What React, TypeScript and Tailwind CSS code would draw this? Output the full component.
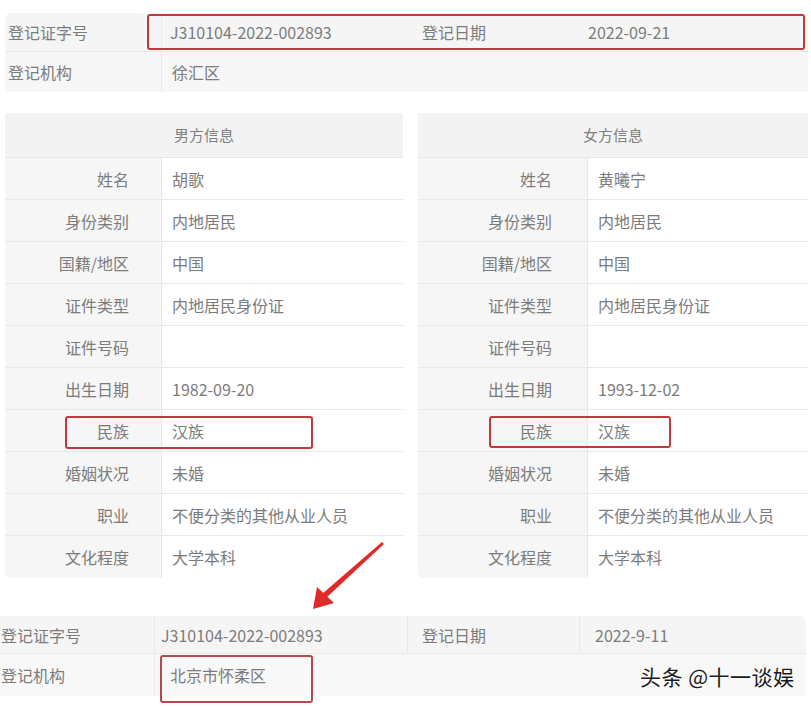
import React from 'react';

const font = { fontFamily: '"Noto Sans CJK SC", "Noto Sans", sans-serif' };

type Row = { label: string; value: string };

const maleRows: Row[] = [
  { label: '姓名', value: '胡歌' },
  { label: '身份类别', value: '内地居民' },
  { label: '国籍/地区', value: '中国' },
  { label: '证件类型', value: '内地居民身份证' },
  { label: '证件号码', value: '' },
  { label: '出生日期', value: '1982-09-20' },
  { label: '民族', value: '汉族' },
  { label: '婚姻状况', value: '未婚' },
  { label: '职业', value: '不便分类的其他从业人员' },
  { label: '文化程度', value: '大学本科' },
];

const femaleRows: Row[] = maleRows.map((r) => {
  if (r.label === '姓名') return { ...r, value: '黄曦宁' };
  if (r.label === '出生日期') return { ...r, value: '1993-12-02' };
  return r;
});

function Panel({ title, rows, labelW, labelPad }: { title: string; rows: Row[]; labelW: string; labelPad: string }) {
  return (
    <div className="flex flex-col rounded-b-md overflow-hidden bg-[#fbfbfb]">
      <div className="h-[45px] flex items-center justify-center bg-[#f3f3f3] border-b border-[#e6e6e6] text-[15px] text-[#808080]">
        {title}
      </div>
      {rows.map((r, i) => (
        <div key={r.label} className={`flex h-[42px] ${i < rows.length - 1 ? 'border-b border-[#e8e8e8]' : ''}`}>
          <div className={`${labelW} ${labelPad} flex items-center justify-end bg-[#f6f6f6] border-r border-[#e8e8e8] text-[16px] text-[#7c7c7c]`}>
            {r.label}
          </div>
          <div className="flex-1 flex items-center pl-[10px] text-[16px] text-[#7c7c7c] bg-white">
            {r.value}
          </div>
        </div>
      ))}
    </div>
  );
}

export default function App() {
  return (
    <div className="relative w-[811px] h-[707px] overflow-hidden bg-white" style={font}>
      {/* top registration block */}
      <div className="ml-[5px] mt-[13px] w-[803px] rounded-t-md overflow-hidden bg-[#f5f5f5] text-[16px] text-[#7c7c7c]">
        <div className="flex h-[39px] border-b border-[#e9e9e9]">
          <div className="w-[157px] pl-[3px] flex items-center border-r border-[#e9e9e9]">登记证字号</div>
          <div className="w-[250px] pl-[8px] flex items-center">J310104-2022-002893</div>
          <div className="w-[168px] pl-[10px] flex items-center">登记日期</div>
          <div className="flex-1 pl-[8px] flex items-center">2022-09-21</div>
        </div>
        <div className="flex h-[40px] bg-[#f7f7f7]">
          <div className="w-[157px] pl-[3px] flex items-center border-r border-[#e9e9e9]">登记机构</div>
          <div className="flex-1 pl-[10px] flex items-center">徐汇区</div>
        </div>
      </div>

      {/* two panels */}
      <div className="flex mt-[21px] ml-[5px] gap-[15px]">
        <div className="w-[398px]">
          <Panel title="男方信息" rows={maleRows} labelW="w-[157px]" labelPad="pr-[32px]" />
        </div>
        <div className="w-[390px]">
          <Panel title="女方信息" rows={femaleRows} labelW="w-[170px]" labelPad="pr-[35px]" />
        </div>
      </div>

      {/* bottom registration block */}
      <div className="mt-[38px] w-[806px] rounded-tr-lg overflow-hidden bg-[#f5f5f5] text-[16px] text-[#7c7c7c]">
        <div className="flex h-[38px] border-b border-[#e9e9e9]">
          <div className="w-[155px] pl-[1px] flex items-center border-r border-[#e9e9e9]">登记证字号</div>
          <div className="w-[253px] pl-[6px] flex items-center border-r border-[#e9e9e9]">J310104-2022-002893</div>
          <div className="w-[172px] pl-[14px] flex items-center border-r border-[#e9e9e9]">登记日期</div>
          <div className="flex-1 pl-[15px] flex items-center">2022-9-11</div>
        </div>
        <div className="flex h-[42px] bg-[#f8f8f8]">
          <div className="w-[155px] pl-[1px] flex items-center border-r border-[#e9e9e9]">登记机构</div>
          <div className="flex-1 pl-[15px] flex items-center">北京市怀柔区</div>
        </div>
      </div>

      {/* red highlight boxes */}
      <div className="absolute left-[147px] top-[14px] w-[658px] h-[36px] border-2 border-[#c0393b] rounded-[3px]" />
      <div className="absolute left-[65px] top-[416px] w-[248px] h-[33px] border-2 border-[#c0393b] rounded-[3px]" />
      <div className="absolute left-[489px] top-[416px] w-[182px] h-[32px] border-2 border-[#c0393b] rounded-[3px]" />
      <div className="absolute left-[160px] top-[655px] w-[153px] h-[48px] border-2 border-[#b8484a] rounded-[3px]" />

      {/* arrow */}
      <svg className="absolute left-0 top-0" width="811" height="707" viewBox="0 0 811 707">
        <path d="M382 542 L384 544 L326 598 L322 594 Z" fill="#e02a2a" />
        <path d="M313 609 L317 587 L334 603 Z" fill="#e02a2a" />
      </svg>

      {/* watermark */}
      <div
        className="absolute left-[640px] top-[666px] text-[21px] tracking-[0.5px] text-[#1a1a1a] leading-none"
        style={{ textShadow: '0 0 2px #fff, 0 0 2px #fff' }}
      >
        头条 @十一谈娱
      </div>
    </div>
  );
}
